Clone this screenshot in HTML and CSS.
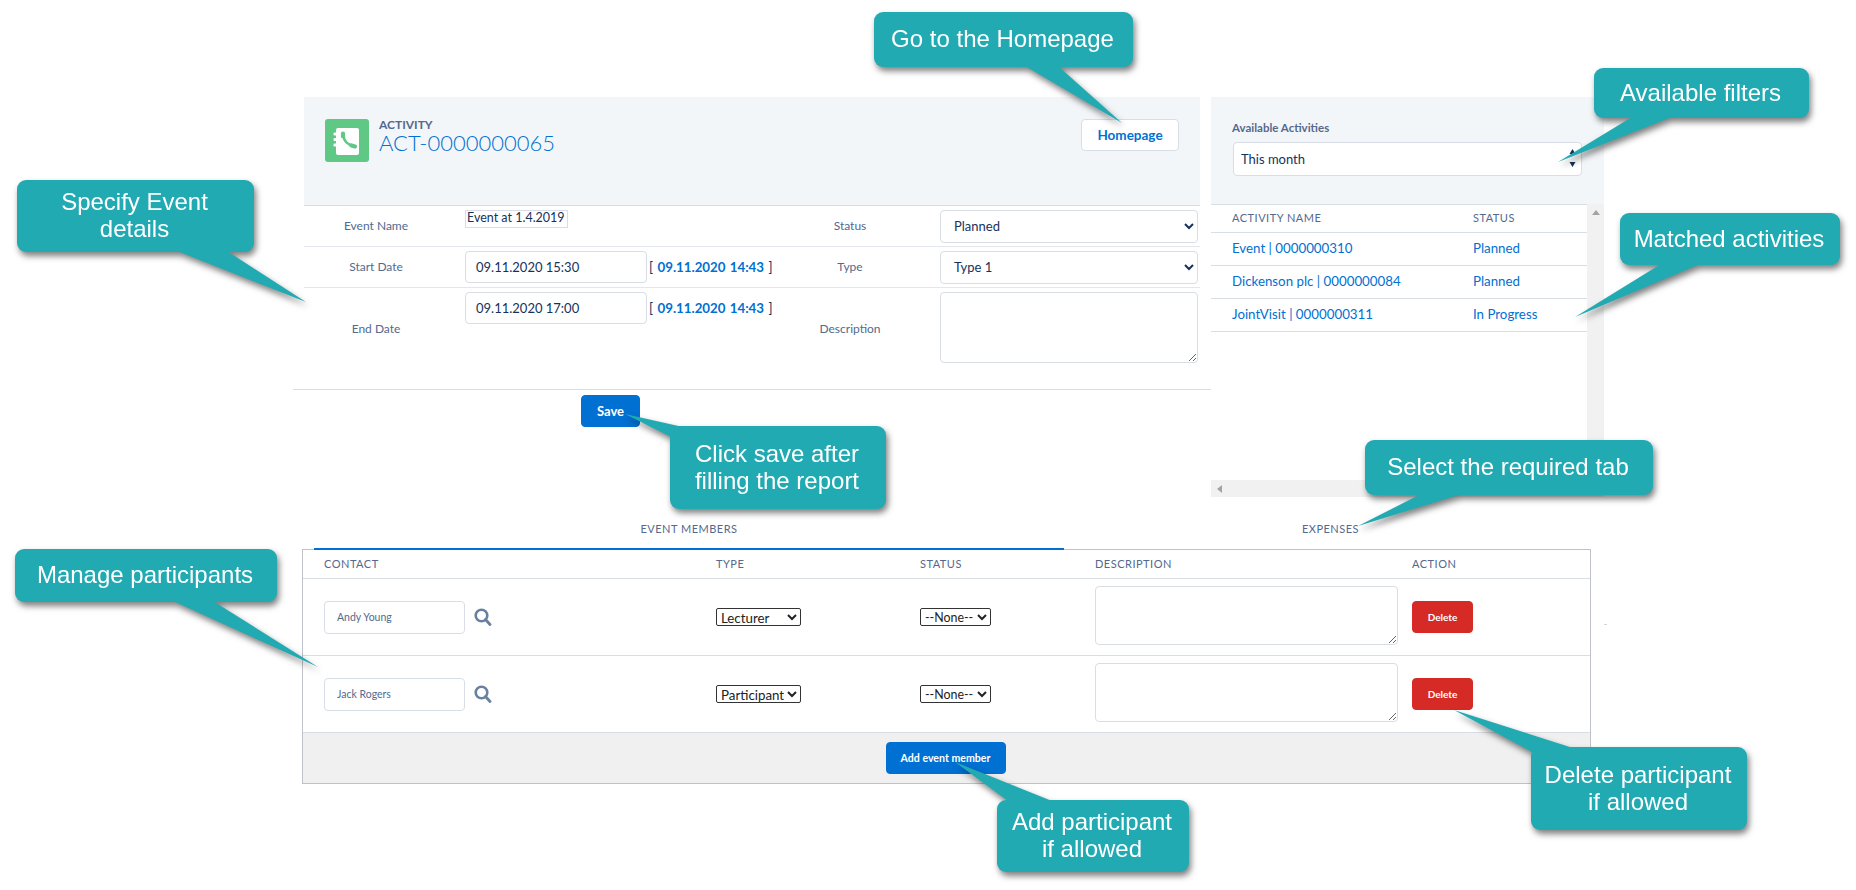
FILE: index.html
```html
<!DOCTYPE html>
<html lang="en">
<head>
    <meta charset="UTF-8">
    <meta name="viewport" content="width=device-width, initial-scale=1.0">
    <title>Activity ACT-0000000065</title>
    <link rel="stylesheet" href="styles.css">
</head>
<body>
    <div class="page">
        <div class="topArea">
            <div class="activity">
                <div class="activityHead">
                    <div class="titleBox">
                        <svg class="appIcon" width="44" height="43" viewBox="0 0 44 43">
                            <rect width="44" height="43" rx="3" fill="#5fc884"/>
                            <rect x="11" y="9" width="23" height="27" rx="2" fill="#fff"/>
                            <rect x="8.5" y="13.5" width="4" height="3" rx="1.2" fill="#fff"/>
                            <rect x="8.5" y="19" width="4" height="3" rx="1.2" fill="#fff"/>
                            <rect x="8.5" y="24.5" width="4" height="3" rx="1.2" fill="#fff"/>
                            <path d="M18.5 16.5Q19 25 29 27" fill="none" stroke="#5fc884" stroke-width="2.6"/>
                            <path d="M18 14.5v3M26.5 26.5l3.500 1" fill="none" stroke="#5fc884" stroke-width="4.200" stroke-linecap="round"/>
                        </svg>
                        <div>
                            <div class="objectType">ACTIVITY</div>
                            <div class="objectName">ACT-0000000065</div>
                        </div>
                    </div>
                    <button class="btn homeBtn">Homepage</button>
                </div>
                <div class="formRow">
                    <span class="fieldLabel">Event Name</span>
                    <div class="fieldValue"><input class="nameInput" type="text" value="Event at 1.4.2019"></div>
                    <span class="fieldLabel">Status</span>
                    <div class="fieldValue">
                        <select class="formSelect"><option>Planned</option></select>
                    </div>
                </div>
                <div class="formRow">
                    <span class="fieldLabel">Start Date</span>
                    <div class="fieldValue dateValue">
                        <input class="dateInput" type="text" value="09.11.2020 15:30">
                        <span class="nowDate">[ <b>09.11.2020 14:43</b> ]</span>
                    </div>
                    <span class="fieldLabel">Type</span>
                    <div class="fieldValue">
                        <select class="formSelect"><option>Type 1</option></select>
                    </div>
                </div>
                <div class="formRow lastRow">
                    <span class="fieldLabel">End Date</span>
                    <div class="fieldValue dateValue">
                        <input class="dateInput" type="text" value="09.11.2020 17:00">
                        <span class="nowDate">[ <b>09.11.2020 14:43</b> ]</span>
                    </div>
                    <span class="fieldLabel">Description</span>
                    <div class="fieldValue"><textarea class="formText"></textarea></div>
                </div>
                <div class="saveLine"></div>
                <button class="btn primary saveBtn">Save</button>
            </div>

            <div class="sidePanel">
                <div class="sideHead">
                    <div class="sideLabel">Available Activities</div>
                    <div class="filterBox">
                        <select class="filterSelect"><option>This month</option></select>
                        <svg class="filterArrows" width="7" height="18" viewBox="0 0 7 18">
                            <path d="M3.500 0L6.500 5H.5zM3.500 18L.5 13H6.500z" fill="#16325c"/>
                        </svg>
                    </div>
                </div>
                <div class="sideScroll">
                    <div class="sideMain">
                        <div class="sideList">
                            <table class="activityTable">
                                <tr><th>ACTIVITY NAME</th><th>STATUS</th></tr>
                                <tr><td>Event | 0000000310</td><td>Planned</td></tr>
                                <tr><td>Dickenson plc | 0000000084</td><td>Planned</td></tr>
                                <tr><td>JointVisit | 0000000311</td><td>In Progress</td></tr>
                            </table>
                        </div>
                        <div class="hBar">
                            <svg width="5" height="8" viewBox="0 0 5 8"><path d="M5 0V8L0 4z" fill="#a3a3a3"/></svg>
                        </div>
                    </div>
                    <div class="vBar">
                        <svg width="8" height="5" viewBox="0 0 8 5"><path d="M4 0L8 5H0z" fill="#a3a3a3"/></svg>
                    </div>
                </div>
            </div>
        </div>

        <div class="tabs">
            <div class="tab active">EVENT MEMBERS</div>
            <div class="tab">EXPENSES</div>
        </div>

        <div class="members">
            <table class="memberTable">
                <colgroup>
                    <col class="colContact"><col class="colType"><col class="colStatus"><col class="colDesc"><col class="colAction">
                </colgroup>
                <tr>
                    <th class="firstCell">CONTACT</th><th>TYPE</th><th>STATUS</th><th>DESCRIPTION</th><th>ACTION</th>
                </tr>
                <tr>
                    <td class="firstCell">
                        <div class="contactBox">
                            <input class="contactInput" type="text" value="Andy Young">
                            <svg width="18" height="18" viewBox="0 0 18 18">
                                <circle cx="7.500" cy="7.500" r="5.800" fill="none" stroke="#6a80a0" stroke-width="2.600"/>
                                <path d="M11.500 11.500L16 16.500" stroke="#6a80a0" stroke-width="2.800" stroke-linecap="round"/>
                            </svg>
                        </div>
                    </td>
                    <td><select class="rowSelect typeSelect"><option>Lecturer</option></select></td>
                    <td><select class="rowSelect statusSelect"><option>--None--</option></select></td>
                    <td><textarea class="rowText"></textarea></td>
                    <td><button class="btn danger">Delete</button></td>
                </tr>
                <tr>
                    <td class="firstCell">
                        <div class="contactBox">
                            <input class="contactInput" type="text" value="Jack Rogers">
                            <svg width="18" height="18" viewBox="0 0 18 18">
                                <circle cx="7.500" cy="7.500" r="5.800" fill="none" stroke="#6a80a0" stroke-width="2.600"/>
                                <path d="M11.500 11.500L16 16.500" stroke="#6a80a0" stroke-width="2.800" stroke-linecap="round"/>
                            </svg>
                        </div>
                    </td>
                    <td><select class="rowSelect typeSelect"><option>Participant</option></select></td>
                    <td><select class="rowSelect statusSelect"><option>--None--</option></select></td>
                    <td><textarea class="rowText"></textarea></td>
                    <td><button class="btn danger">Delete</button></td>
                </tr>
            </table>
            <div class="membersFoot">
                <button class="btn primary addBtn">Add event member</button>
            </div>
        </div>

        <!-- help callouts over the page -->
        <div class="callout homeTip">
            <svg class="tail"><polygon points="151,54 248,111 184,54"/></svg>
            <span>Go to the Homepage</span>
        </div>
        <div class="callout eventTip">
            <svg class="tail"><polygon points="160,71 289,122 210,71"/></svg>
            <span>Specify Event<br>details</span>
        </div>
        <div class="callout manageTip">
            <svg class="tail"><polygon points="158,52 303,118 198,52"/></svg>
            <span>Manage participants</span>
        </div>
        <div class="callout saveTip">
            <svg class="tail"><polygon points="1,11 -45,-12 13,1"/></svg>
            <span>Click save after<br>filling the report</span>
        </div>
        <div class="callout filterTip">
            <svg class="tail"><polygon points="38,49 -36,94 78,49"/></svg>
            <span>Available filters</span>
        </div>
        <div class="callout matchTip">
            <svg class="tail"><polygon points="41,51 -45,104 80,51"/></svg>
            <span>Matched activities</span>
        </div>
        <div class="callout tabTip">
            <svg class="tail"><polygon points="56,54 -7,86 97,54"/></svg>
            <span>Select the required tab</span>
        </div>
        <div class="callout deleteTip">
            <svg class="tail"><polygon points="1,5 -77,-37 42,1"/></svg>
            <span>Delete participant<br>if allowed</span>
        </div>
        <div class="callout addTip">
            <svg class="tail"><polygon points="11,1 -42,-38 55,1"/></svg>
            <span>Add participant<br>if allowed</span>
        </div>
        <div class="strayMark"></div>
    </div>
</body>
</html>
```

FILE: styles.css
```css
* {
    box-sizing: border-box;
}
html,body {
    margin: 0;
    height: 100%;
    background: #fff;
}
body {
    font-family: "Lato", "Liberation Sans", sans-serif;
    font-size: 13px;
    color: #16325c;
}
input, select, textarea, button {
    font-family: inherit;
    color: #16325c;
}
.page {
    position: relative;
    width: 1856px;
    height: 890px;
    overflow: hidden;
    padding-top: 97px;
}
.topArea {
    display: flex;
    height: 400px;
    margin-left: 293px;
}

/* buttons */
.btn {
    height: 32px;
    border: 1px solid #d8dde6;
    border-radius: 4px;
    background: #fff;
    font-size: 13px;
    font-weight: 700;
    padding: 0;
}
.btn.primary {
    background: #0070d2;
    border-color: #0070d2;
    color: #fff;
}
.btn.danger {
    width: 61px;
    background: #d62a26;
    border-color: #d62a26;
    color: #fff;
    font-size: 10px;
}

/* activity form */
.activity {
    width: 918px;
}
.activityHead {
    display: flex;
    justify-content: space-between;
    align-items: flex-start;
    height: 109px;
    margin: 0 11px;
    padding: 22px 21px 0;
    background: #f3f6f9;
    border-bottom: 1px solid #d8dde6;
}
.titleBox {
    display: flex;
    gap: 10px;
}
.objectType {
    font-size: 12px;
    font-weight: 700;
    line-height: 11px;
    color: #54698d;
}
.objectName {
    font-size: 22px;
    line-height: 26px;
    font-weight: 300;
    color: #0070d2;
}
.homeBtn {
    width: 98px;
    color: #0070d2;
    font-size: 13.500px;
}
.formRow {
    display: grid;
    grid-template-columns: 144px 330px 144px 278px;
    align-items: center;
    height: 41px;
    margin: 0 11px;
    border-bottom: 1px solid #e3e7ed;
}
.lastRow {
    height: 82px;
    border-bottom: 0;
}
.fieldLabel {
    padding-bottom: 2px;
    text-align: center;
    font-size: 12px;
    color: #54698d;
}
.fieldValue {
    align-self: start;
    padding: 4px 0 0 17px;
}
.fieldValue .formSelect, .fieldValue .formText {
    margin-left: 1px;
}
.dateValue {
    display: flex;
    align-items: center;
    gap: 2px;
    height: 36px;
}
.nameInput {
    display: block;
    width: 103px;
    height: 18px;
    padding: 0 0 3px 1px;
    border: 1px solid #d8dde6;
    font-size: 12.500px;
}
.dateInput {
    width: 182px;
    height: 32px;
    padding: 0 10px;
    border: 1px solid #d8dde6;
    border-radius: 4px;
    font-size: 13px;
}
.nowDate {
    font-size: 13.300px;
    word-spacing: 1px;
}
.nowDate b {
    color: #0070d2;
}
.formSelect {
    display: block;
    width: 258px;
    height: 33px;
    padding: 0 9px 2px;
    border: 1px solid #d8dde6;
    border-radius: 4px;
    background: #fff;
    font-size: 13px;
}
.formText {
    display: block;
    width: 258px;
    height: 71px;
    border: 1px solid #d8dde6;
    border-radius: 4px;
}
.saveLine {
    margin-top: 19px;
    border-top: 1px solid #d8dde6;
}
.saveBtn {
    display: block;
    width: 59px;
    margin: 5px 0 0 288px;
}

/* right panel */
.sidePanel {
    width: 393px;
}
.sideHead {
    height: 107px;
    padding: 24px 22px 0 21px;
    background: #f3f6f9;
}
.sideLabel {
    font-size: 11.500px;
    font-weight: 700;
    line-height: 14px;
    color: #54698d;
}
.filterBox {
    position: relative;
    width: 349px;
    margin: 7px 0 0 1px;
}
.filterSelect {
    display: block;
    width: 100%;
    height: 34px;
    padding: 0 7px;
    appearance: none;
    border: 1px solid #d8dde6;
    border-radius: 4px;
    background: #fff;
    font-size: 13px;
}
.filterArrows {
    position: absolute;
    right: 6px;
    top: 7px;
}
.sideScroll {
    display: flex;
    height: 293px;
}
.sideMain {
    display: flex;
    flex-direction: column;
    width: 376px;
}
.sideList {
    flex: 1;
    border-top: 1px solid #d8dde6;
}
.activityTable {
    width: 100%;
    border-collapse: separate;
    border-spacing: 0;
}
.activityTable th {
    width: 262px;
    height: 28px;
    padding: 0 0 2px 21px;
    text-align: left;
    font-size: 11px;
    font-weight: 400;
    letter-spacing: .5px;
    color: #54698d;
    border-bottom: 1px solid #d8dde6;
}
.activityTable th + th, .activityTable td + td {
    width: 114px;
    padding-left: 0;
}
.activityTable td {
    height: 33px;
    padding: 0 0 2px 21px;
    font-size: 13.300px;
    color: #0070d2;
    border-bottom: 1px solid #d8dde6;
}
.hBar {
    display: flex;
    align-items: center;
    height: 17px;
    padding-left: 6px;
    background: #f1f1f1;
}
.vBar {
    display: flex;
    justify-content: center;
    width: 17px;
    padding-top: 6px;
    background: #f1f1f1;
}
.vBar svg, .hBar svg {
    display: block;
}

/* tabs */
.tabs {
    display: flex;
    height: 53px;
    margin-left: 314px;
}
.tab {
    position: relative;
    z-index: 1;
    width: 750px;
    padding-top: 25px;
    text-align: center;
    font-size: 11px;
    line-height: 14px;
    letter-spacing: .5px;
    color: #54698d;
    border-bottom: 2px solid transparent;
}
.tab + .tab {
    width: 533px;
}
.tab.active {
    border-bottom-color: #0070d2;
}

/* members table */
.members {
    width: 1289px;
    margin: -1px 0 0 302px;
    border: 1px solid #bfc3c9;
}
.memberTable {
    width: 100%;
    table-layout: fixed;
    border-collapse: separate;
    border-spacing: 0;
}
.colContact { width: 413px; }
.colType { width: 204px; }
.colStatus { width: 175px; }
.colDesc { width: 317px; }
.colAction { width: 178px; }
.memberTable th {
    height: 29px;
    padding: 0 0 2px;
    text-align: left;
    font-size: 11px;
    font-weight: 400;
    letter-spacing: .5px;
    color: #54698d;
    border-bottom: 1px solid #d8dde6;
}
.memberTable td {
    height: 77px;
    padding: 0;
    vertical-align: middle;
    border-bottom: 1px solid #d8dde6;
}
.memberTable .firstCell {
    padding-left: 21px;
}
.contactBox {
    display: flex;
    align-items: center;
    gap: 9px;
}
.contactInput {
    width: 141px;
    height: 33px;
    padding: 0 12px;
    border: 1px solid #d8dde6;
    border-radius: 4px;
    font-size: 10.500px;
    color: #54698d;
}
.rowSelect {
    display: block;
    height: 18px;
    padding: 0;
    border: 1px solid #333;
    border-radius: 2px;
    background: #fff;
    font-size: 13.300px;
    color: #222;
}
.typeSelect {
    width: 85px;
}
.statusSelect {
    width: 71px;
    font-size: 12.400px;
}
.rowText {
    display: block;
    width: 303px;
    height: 59px;
    margin-bottom: 3px;
    border: 1px solid #d8dde6;
    border-radius: 4px;
}
.membersFoot {
    display: flex;
    justify-content: center;
    height: 50px;
    padding: 9px 2px 0 0;
    background: #f0f0f0;
}
.addBtn {
    width: 120px;
    font-size: 10.600px;
}

/* callouts */
.callout {
    position: absolute;
    z-index: 5;
    display: flex;
    align-items: center;
    justify-content: center;
    padding: 0 2px 2px 0;
    background: #22aab3;
    border-radius: 9px;
    text-align: center;
    font-family: "Liberation Sans", Arial, sans-serif;
    font-size: 24px;
    line-height: 27px;
    color: #fff;
    filter: drop-shadow(2px 4px 3px rgba(0, 0, 0, .5));
}
.callout span {
    position: relative;
}
.tail {
    position: absolute;
    left: 0;
    top: 0;
    width: 100%;
    height: 100%;
    overflow: visible;
    fill: #22aab3;
}
.homeTip { left: 874px; top: 12px; width: 259px; height: 55px; }
.eventTip { left: 17px; top: 180px; width: 237px; height: 72px; }
.manageTip { left: 15px; top: 549px; width: 262px; height: 53px; }
.saveTip { left: 670px; top: 426px; width: 216px; height: 83px; }
.filterTip { left: 1594px; top: 68px; width: 215px; height: 50px; }
.matchTip { left: 1620px; top: 213px; width: 220px; height: 52px; }
.tabTip { left: 1365px; top: 440px; width: 288px; height: 55px; }
.deleteTip { left: 1531px; top: 747px; width: 216px; height: 83px; }
.addTip { left: 997px; top: 800px; width: 192px; height: 72px; }
.strayMark {
    position: absolute;
    left: 1604px;
    top: 624px;
    width: 3px;
    height: 1px;
    background: #d5d5d5;
}
```
